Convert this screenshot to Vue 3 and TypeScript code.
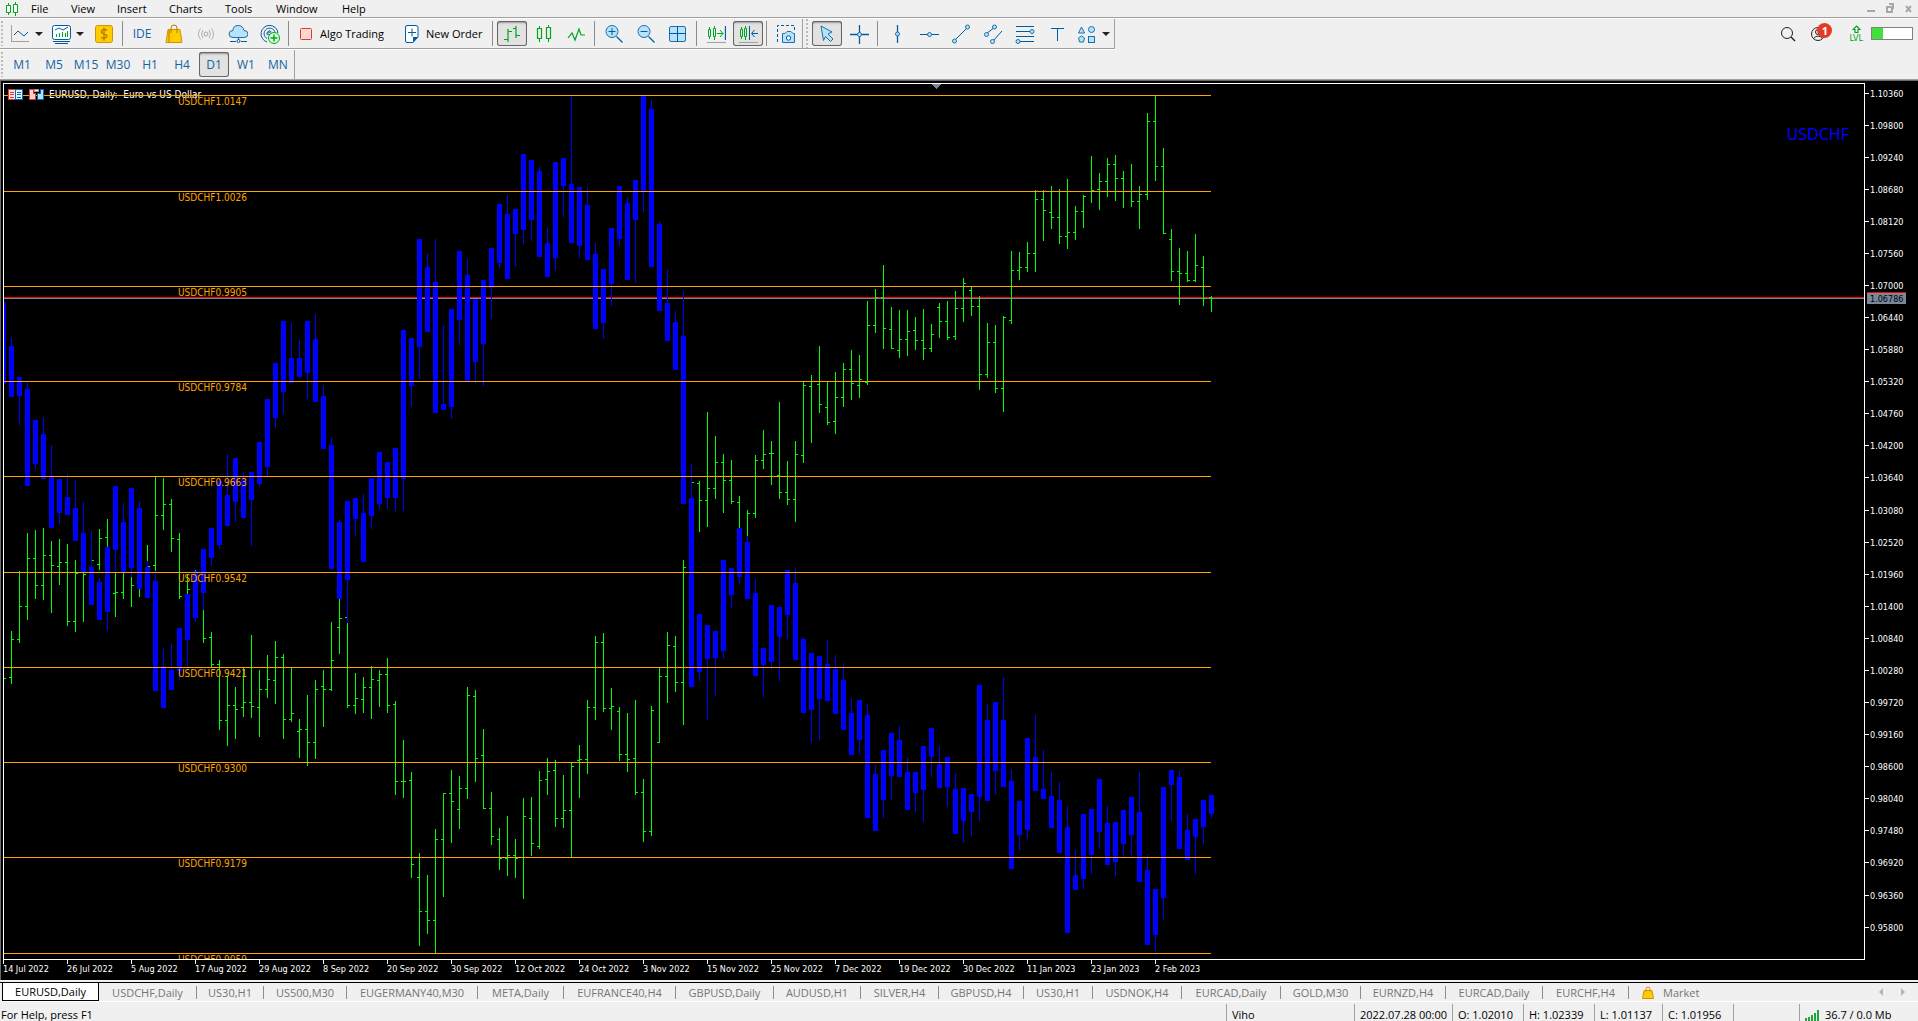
<script setup lang="ts">
import { ref } from 'vue'

type Quad = [number, number, number, number]

interface Tool {
  icon: string
  label: string
  kind?: 'sep' | 'grip' | 'wide' | 'text' | 'caret'
  pressed?: boolean
}

const menus = [
  { name: 'File', width: 40 },
  { name: 'View', width: 46 },
  { name: 'Insert', width: 52 },
  { name: 'Charts', width: 56 },
  { name: 'Tools', width: 51 },
  { name: 'Window', width: 66 },
  { name: 'Help', width: 46 },
]

const B = 'fill="none" stroke="#005c9e"'
const L = 'fill="#b8e1fa" stroke="#1a70aa"'
const G = 'fill="none" stroke="#00a51e"'

const icons: Record<string, string> = {
  line: `<path d="M1.5 1v17M1 17.5h18" fill="none" stroke="#a0a0a0"/><path d="M4 11l4-4 6 5 4-4" ${B}/>`,
  indicators: `<rect x="1.500" y="1.500" width="18" height="14" rx="2" fill="#fff" stroke="#005c9e"/><path d="M4 6l4-2 4 2 5-3" ${B}/><path d="M5.500 13v-3M8.500 13V9M11.500 13V8M14.500 13V9M16.500 13V7" ${G}/><path d="M2 17.500h17M4 19.500h13" ${B}/>`,
  dollar: `<rect x="1.500" y="1.500" width="17" height="17" rx="2" fill="#fc0" stroke="#cf9500"/><path d="M13 6.500Q10 4.500 8 6.500T10 10T12.500 13Q10 15.500 7 13.500M10 3.500v13" fill="none" stroke="#b77b00" stroke-width="1.300"/>`,
  bag: `<path d="M4 5.500h12l2 13H2z" fill="#fc0" stroke="#cf9500"/><path d="M7 9V4q0-3 3-3t3 3v5M5 6v12" fill="none" stroke="#b77b00"/>`,
  signal: `<circle cx="10" cy="10" r="2" fill="none" stroke="#a8a8a8"/><path d="M7 6q-3 4 0 8M13 6q3 4 0 8M4.500 4.500q-4 5.500 0 11M15.500 4.500q4 5.500 0 11" fill="none" stroke="#b0b0b0"/>`,
  cloud: `<path d="M5 13.500q-4 0-4-3.500t4-3.500q0-5 5-5t6 5q4 0 4 3.500t-4 3.500z" ${L}/><path d="M10.500 14v4M2 17.500h6M13 17.500h6" ${B}/><circle cx="10.500" cy="17" r="1.500" fill="#fff" stroke="#005c9e"/>`,
  radar: `<path d="M7 18a8.500 8.500 0 1 1 11-9M7 14.500a5.500 5.500 0 1 1 8-6M7.500 11a2.500 2.500 0 1 1 4-3" ${B}/><circle cx="9" cy="9.500" r="1.500" ${L}/><circle cx="14" cy="14" r="5.500" fill="#dfffe0" stroke="#00a51e"/><path d="M14 10.500v7M10.500 14h7" ${G} stroke-width="1.500"/>`,
  algo: `<rect x="4.500" y="4.500" width="11" height="11" rx="1" fill="#ffd8d0" stroke="#e03a36"/>`,
  order: `<path d="M5 1.500h9q2 0 2 2V13l-5 5.500H5q-1.500 0-1.500-1.500V3q0-1.500 1.500-1.500z" fill="#fff" stroke="#005c9e"/><path d="M16 13l-5 5.500V13z" fill="#005c9e"/><path d="M10 4.500v8M6 8.500h8" ${B}/>`,
  bars: `<path d="M6 5v13M2 15.500h4M6 7.500h4M14 2v12M11 4.500h3M14 11.500h4" ${G} stroke-width="1.200"/>`,
  candles: `<path d="M5.500 2v2M5.500 15v3M14.500 1v2M14.500 15v3" ${G}/><path d="M3.500 4.500h4v10h-4zM12.500 3.500h4v11h-4z" ${G} stroke-width="1.200"/>`,
  zigzag: `<path d="M2 14l4-5 3 7 4-11 2 6h4" ${G} stroke-width="1.200"/>`,
  zoomin: `<path d="M12.500 12.500l6 6" ${B} stroke-width="1.300"/><circle cx="8" cy="7.500" r="6" ${L}/><path d="M8 4v7M4.500 7.500h7" ${B}/>`,
  zoomout: `<path d="M12.500 12.500l6 6" ${B} stroke-width="1.300"/><circle cx="8" cy="7.500" r="6" ${L}/><path d="M4.500 7.500h7" ${B}/>`,
  tile: `<rect x="1.500" y="2.500" width="16" height="15" rx="1.500" ${L}/><path d="M9.500 2v16M1 9.500h17" ${B}/>`,
  scroll: `<path d="M3.500 3v2M3.500 13v2M8.500 2v2M8.500 13v3M2.500 5.500h2v7h-2zM7.500 4.500h2v8h-2zM11 9.500h6M14 6l3 3.500-3 3.500" ${G}/><path d="M19.500 2v14" ${B} stroke-width="1.300"/><path d="M1 18.500h19" fill="none" stroke="#a0a0a0"/>`,
  shift: `<path d="M3.500 3v2M3.500 13v2M7.500 2v2M7.500 13v3M2.500 5.500h2v7h-2zM6.500 4.500h2v8h-2z" ${G}/><path d="M11.500 2v14M20 9.500h-6M16.500 6l-3 3.500 3 3.500" ${B}/><path d="M1 18.500h19" fill="none" stroke="#a0a0a0"/>`,
  camera: `<path d="M1.500 18V1.500h17V6" ${B} stroke-dasharray="3 2"/><path d="M7 9.500h2l2-2h4l2 2h1.500v9h-12v-9z" ${L}/><circle cx="12.500" cy="14" r="2.200" fill="#fff" stroke="#005c9e"/>`,
  pointer: `<path d="M4 2l11 6-4 2 5 5-2.500 2.500-5-5-2 4z" ${L}/>`,
  cross: `<path d="M10.500 1v19M1 10.500h19" ${B} stroke-width="1.300"/><circle cx="10.500" cy="10.500" r="2" ${L}/>`,
  vline: `<path d="M10.500 1v18" ${B} stroke-width="1.300"/><circle cx="10.500" cy="10" r="2" ${L}/>`,
  hline: `<path d="M1 10.500h19" ${B}/><circle cx="10.500" cy="10.500" r="2" ${L}/>`,
  trend: `<path d="M4 16L16 4" ${B}/><circle cx="3.500" cy="17" r="2" ${L}/><circle cx="16.500" cy="3" r="2" ${L}/>`,
  channel: `<path d="M3 10l9-7M10 17l9-10" ${B}/><circle cx="3.500" cy="10.500" r="2" ${L}/><circle cx="11.500" cy="3" r="2" ${L}/><circle cx="9.500" cy="17.500" r="2" ${L}/>`,
  fibo: `<path d="M1 2.500h18M1 7.500h14M1 12.500h18M5 17.500h14" ${B}/><circle cx="17" cy="7.500" r="2" ${L}/><circle cx="3" cy="17.500" r="2" ${L}/>`,
  text: `<path d="M4 4.500h13M10.500 5v12" ${B}/>`,
  shapes: `<path d="M4.500 3l3 6h-6z" ${L}/><circle cx="14.500" cy="5.500" r="3" ${L}/><path d="M4.500 12l3 2-1 4h-4l-1-4z" ${L}/><rect x="11.500" y="12.500" width="6" height="6" ${L}/>`,
}

const tools: Tool[] = [
  { icon: '', label: '', kind: 'grip' },
  { icon: 'line', label: 'Chart type', kind: 'caret' },
  { icon: 'indicators', label: 'Indicators', kind: 'caret' },
  { icon: 'dollar', label: 'Symbols' },
  { icon: '', label: '', kind: 'sep' },
  { icon: '', label: 'IDE', kind: 'text' },
  { icon: 'bag', label: 'Market' },
  { icon: 'signal', label: 'Signals' },
  { icon: 'cloud', label: 'VPS' },
  { icon: 'radar', label: 'Copy trading' },
  { icon: '', label: '', kind: 'sep' },
  { icon: 'algo', label: 'Algo Trading', kind: 'wide' },
  { icon: 'order', label: 'New Order', kind: 'wide' },
  { icon: '', label: '', kind: 'sep' },
  { icon: 'bars', label: 'Bar chart', pressed: true },
  { icon: 'candles', label: 'Candlesticks' },
  { icon: 'zigzag', label: 'Line chart' },
  { icon: '', label: '', kind: 'sep' },
  { icon: 'zoomin', label: 'Zoom in' },
  { icon: 'zoomout', label: 'Zoom out' },
  { icon: 'tile', label: 'Tile windows' },
  { icon: '', label: '', kind: 'sep' },
  { icon: 'scroll', label: 'Auto scroll' },
  { icon: 'shift', label: 'Chart shift', pressed: true },
  { icon: '', label: '', kind: 'sep' },
  { icon: 'camera', label: 'Screenshot' },
  { icon: '', label: '', kind: 'grip' },
  { icon: 'pointer', label: 'Cursor', pressed: true },
  { icon: 'cross', label: 'Crosshair' },
  { icon: '', label: '', kind: 'sep' },
  { icon: 'vline', label: 'Vertical line' },
  { icon: 'hline', label: 'Horizontal line' },
  { icon: 'trend', label: 'Trendline' },
  { icon: 'channel', label: 'Channel' },
  { icon: 'fibo', label: 'Fibonacci' },
  { icon: 'text', label: 'Text' },
  { icon: 'shapes', label: 'Shapes', kind: 'caret' },
]

const frames = ['M1', 'M5', 'M15', 'M30', 'H1', 'H4', 'D1', 'W1', 'MN']
const frame = ref('D1')

const tabs = [
  { name: 'EURUSD,Daily', width: 97 },
  { name: 'USDCHF,Daily', width: 98 },
  { name: 'US30,H1', width: 67 },
  { name: 'US500,M30', width: 83 },
  { name: 'EUGERMANY40,M30', width: 131 },
  { name: 'META,Daily', width: 86 },
  { name: 'EUFRANCE40,H4', width: 112 },
  { name: 'GBPUSD,Daily', width: 98 },
  { name: 'AUDUSD,H1', width: 87 },
  { name: 'SILVER,H4', width: 78 },
  { name: 'GBPUSD,H4', width: 85 },
  { name: 'US30,H1', width: 69 },
  { name: 'USDNOK,H4', width: 89 },
  { name: 'EURCAD,Daily', width: 99 },
  { name: 'GOLD,M30', width: 80 },
  { name: 'EURNZD,H4', width: 85 },
  { name: 'EURCAD,Daily', width: 97 },
  { name: 'EURCHF,H4', width: 86 },
]
const activeTab = ref(0)

const dates = [
  '14 Jul 2022', '26 Jul 2022', '5 Aug 2022', '17 Aug 2022', '29 Aug 2022', '8 Sep 2022', '20 Sep 2022',
  '30 Sep 2022', '12 Oct 2022', '24 Oct 2022', '3 Nov 2022', '15 Nov 2022', '25 Nov 2022', '7 Dec 2022',
  '19 Dec 2022', '30 Dec 2022', '11 Jan 2023', '23 Jan 2023', '2 Feb 2023',
]

const prices = Array.from({ length: 27 }, (_, i) => ({
  label: (1.1036 - i * 0.0056).toFixed(4) + '0',
  y: Math.floor(13 + i * 32.08),
}))

const levels = [
  { y: 15, price: '1.0147' },
  { y: 111, price: '1.0026' },
  { y: 206, price: '0.9905' },
  { y: 301, price: '0.9784' },
  { y: 396, price: '0.9663' },
  { y: 492, price: '0.9542' },
  { y: 587, price: '0.9421' },
  { y: 682, price: '0.9300' },
  { y: 777, price: '0.9179' },
  { y: 873, price: '0.9059' },
]

// EURUSD bars: open, high, low, close on the chart's vertical scale
const eurusd: Quad[] = [
  [598, 590, 600, 598], [597, 551, 604, 559], [559, 491, 563, 526], [526, 453, 540, 478], [478, 450, 519, 505],
  [505, 448, 520, 475], [475, 461, 533, 485], [486, 459, 505, 482], [482, 464, 546, 541], [541, 480, 552, 493],
  [491, 460, 542, 494], [494, 475, 510, 480], [484, 449, 490, 458], [457, 439, 525, 513], [513, 480, 537, 512],
  [512, 480, 519, 485], [485, 485, 527, 505], [500, 480, 517, 490], [490, 465, 500, 486], [485, 397, 491, 435],
  [435, 398, 450, 424], [424, 419, 472, 458], [459, 453, 519, 516], [516, 495, 530, 509], [509, 490, 530, 500],
  [500, 490, 563, 558], [557, 552, 588, 584], [584, 580, 650, 640], [640, 596, 666, 625], [625, 607, 659, 629],
  [627, 587, 637, 622], [622, 555, 638, 626], [627, 590, 657, 609], [609, 575, 618, 599], [600, 561, 624, 577],
  [577, 574, 659, 639], [639, 588, 642, 633], [651, 639, 678, 649], [649, 615, 686, 662], [662, 600, 679, 609],
  [606, 590, 647, 609], [609, 542, 611, 580], [547, 510, 574, 538], [537, 543, 628, 625], [625, 593, 634, 618],
  [619, 597, 633, 607], [607, 586, 639, 599], [600, 590, 627, 594], [594, 578, 633, 625], [624, 621, 715, 701],
  [701, 660, 718, 701], [700, 692, 798, 784], [797, 773, 866, 831], [831, 795, 854, 840], [840, 749, 873, 759],
  [759, 713, 817, 713], [713, 690, 763, 721], [729, 696, 749, 708], [708, 607, 719, 615], [616, 610, 702, 678],
  [675, 649, 729, 728], [728, 712, 765, 756], [759, 748, 790, 778], [778, 736, 796, 775], [775, 759, 798, 778],
  [777, 718, 819, 736], [738, 717, 776, 763], [766, 691, 769, 700], [699, 678, 715, 691], [690, 680, 747, 738],
  [738, 695, 748, 730], [730, 683, 777, 686], [680, 665, 718, 679], [679, 620, 694, 627], [627, 556, 640, 562],
  [562, 553, 632, 628], [628, 608, 650, 626], [631, 627, 681, 674], [674, 633, 692, 679], [678, 620, 715, 712],
  [712, 699, 762, 751], [751, 626, 756, 630], [662, 587, 663, 596], [596, 552, 623, 565], [566, 556, 612, 602],
  [602, 480, 645, 487], [487, 420, 490, 402], [403, 401, 452, 420], [420, 332, 447, 408], [408, 356, 419, 382],
  [382, 374, 433, 400], [400, 380, 424, 421], [422, 416, 480, 460], [470, 430, 456, 433], [433, 375, 438, 380],
  [380, 350, 389, 374], [373, 361, 405, 373], [395, 322, 419, 412], [412, 381, 425, 419], [419, 361, 442, 374],
  [375, 301, 383, 305], [306, 295, 363, 301], [304, 266, 333, 324], [327, 301, 345, 342], [341, 292, 354, 317],
  [317, 283, 327, 289], [289, 270, 320, 303], [305, 275, 318, 299], [302, 221, 305, 245], [245, 209, 253, 217],
  [217, 185, 269, 248], [249, 227, 269, 268], [270, 230, 278, 259], [259, 230, 276, 251], [250, 237, 270, 260],
  [260, 229, 280, 268], [268, 244, 272, 254], [227, 223, 258, 241], [241, 221, 260, 257], [256, 211, 260, 228],
  [228, 198, 242, 203], [210, 206, 236, 226], [226, 216, 310, 294], [294, 243, 298, 262], [262, 245, 313, 308],
  [308, 236, 332, 237], [240, 171, 244, 190], [190, 172, 200, 187], [187, 162, 192, 173], [173, 110, 192, 119],
  [119, 110, 161, 130], [132, 106, 149, 137], [137, 109, 164, 156], [156, 99, 169, 152], [152, 126, 160, 131],
  [131, 115, 148, 116], [111, 76, 123, 110], [109, 93, 130, 101], [101, 78, 117, 84], [84, 75, 121, 98],
  [98, 91, 128, 111], [111, 84, 127, 121], [121, 106, 149, 114], [114, 33, 120, 41], [41, 16, 101, 86],
  [86, 68, 154, 153], [159, 149, 201, 191], [191, 168, 225, 193], [193, 171, 202, 200], [200, 154, 202, 185],
  [187, 176, 226, 218], [217, 216, 232, 218],
]

// USDCHF candles: high, body top, body bottom, low on the same scale
const usdchf: Quad[] = [
  [222, 222, 304, 304], [257, 266, 317, 317], [297, 297, 316, 345], [302, 309, 406, 406], [340, 340, 384, 390],
  [337, 354, 399, 399], [365, 397, 448, 448], [399, 399, 433, 444], [394, 417, 435, 435], [400, 428, 461, 461],
  [422, 453, 492, 492], [451, 487, 525, 525], [498, 502, 540, 540], [467, 467, 532, 551], [406, 406, 470, 492],
  [423, 442, 492, 492], [408, 408, 488, 497], [421, 428, 509, 509], [481, 487, 518, 518], [491, 501, 611, 611],
  [568, 586, 628, 628], [564, 590, 610, 610], [548, 548, 591, 600], [514, 514, 560, 588], [491, 491, 538, 542],
  [469, 469, 513, 530], [448, 448, 478, 486], [401, 401, 465, 469], [374, 415, 446, 446], [378, 378, 422, 442],
  [392, 399, 438, 438], [392, 392, 420, 466], [362, 362, 404, 406], [319, 319, 387, 396], [283, 283, 338, 348],
  [241, 241, 312, 334], [243, 278, 303, 303], [260, 278, 297, 297], [241, 241, 293, 319], [234, 259, 322, 322],
  [305, 316, 369, 369], [357, 365, 489, 489], [440, 442, 519, 519], [421, 421, 500, 543], [418, 418, 439, 456],
  [414, 433, 482, 482], [398, 398, 436, 449], [372, 372, 424, 429], [382, 382, 418, 429], [368, 368, 418, 432],
  [250, 250, 399, 431], [258, 258, 306, 327], [159, 159, 267, 299], [173, 187, 252, 252], [159, 202, 333, 333],
  [245, 324, 330, 330], [229, 229, 327, 339], [171, 171, 240, 265], [179, 195, 301, 301], [219, 219, 282, 303],
  [200, 200, 264, 306], [168, 168, 208, 239], [124, 124, 183, 188], [115, 134, 199, 199], [129, 129, 154, 187],
  [74, 74, 150, 164], [80, 80, 140, 161], [87, 91, 177, 177], [148, 163, 197, 197], [82, 82, 178, 191],
  [78, 78, 106, 137], [16, 104, 163, 163], [107, 107, 166, 178], [107, 125, 180, 180], [163, 174, 249, 249],
  [189, 189, 243, 259], [148, 148, 204, 226], [106, 106, 159, 166], [117, 123, 200, 200], [100, 100, 140, 203],
  [16, 16, 111, 132], [20, 29, 187, 187], [141, 144, 231, 231], [189, 223, 261, 261], [231, 242, 290, 290],
  [211, 256, 424, 424], [384, 418, 607, 607], [534, 534, 592, 601], [545, 545, 579, 640], [551, 551, 578, 616],
  [480, 480, 571, 579], [488, 488, 515, 528], [448, 448, 497, 504], [456, 462, 519, 519], [499, 513, 596, 596],
  [568, 568, 585, 617], [525, 525, 582, 589], [527, 527, 557, 601], [490, 490, 535, 559], [488, 503, 580, 580],
  [557, 559, 633, 633], [573, 573, 630, 663], [576, 576, 619, 660], [560, 584, 621, 621], [575, 589, 634, 634],
  [583, 600, 650, 650], [618, 633, 675, 675], [620, 620, 660, 674], [624, 635, 738, 738], [685, 694, 751, 751],
  [670, 670, 720, 738], [653, 653, 696, 720], [646, 660, 697, 697], [677, 692, 730, 730], [692, 692, 713, 732],
  [666, 666, 710, 742], [648, 648, 677, 697], [666, 684, 708, 708], [677, 677, 707, 727], [693, 709, 754, 754],
  [708, 708, 741, 763], [714, 714, 732, 756], [605, 605, 717, 741], [624, 640, 721, 721], [622, 622, 691, 715],
  [597, 640, 707, 707], [689, 701, 789, 789], [721, 721, 755, 771], [658, 658, 750, 759], [635, 677, 711, 711],
  [670, 709, 719, 719], [692, 716, 748, 748], [702, 720, 773, 773], [726, 747, 853, 853], [770, 795, 810, 810],
  [734, 734, 799, 809], [729, 729, 775, 794], [699, 699, 752, 769], [726, 743, 785, 785], [742, 742, 782, 796],
  [730, 730, 764, 777], [717, 717, 755, 777], [692, 732, 802, 802], [775, 790, 865, 865], [809, 809, 855, 873],
  [707, 707, 818, 840], [690, 690, 705, 741], [691, 697, 769, 769], [734, 750, 780, 780], [739, 739, 757, 794],
  [720, 720, 747, 764], [715, 715, 734, 738],
]

const step = 8
const barX = (i: number) => 3 + i * step
const box = (x: number, y: number, w: number, h: number) => `M${x} ${y}h${w}v${h}h${-w}z`

const barPath = eurusd
  .map(([o, h, l, c], i) => box(barX(i), h, 1, l - h) + box(barX(i) - 2, o, 2, 1) + box(barX(i) + 1, c, 2, 1))
  .join('')
const wickPath = usdchf.map(([h, , , l], i) => box(barX(i), h, 1, l - h)).join('')
const bodyPath = usdchf.map(([, t, b], i) => box(barX(i) - 2, t, 5, b - t)).join('')
</script>

<template>
  <div class="terminal">
    <nav class="menubar">
      <svg class="logo" width="14" height="14" viewBox="0 0 14 14" fill="#fff" stroke="#00a51e">
        <path d="M3.500 1v12M10.500 0v14" /><path d="M1.500 3.500h4v7h-4zM8.500 2.500h4v8h-4z" />
      </svg>
      <button v-for="m in menus" :key="m.name" type="button" :style="{ width: m.width + 'px' }">{{ m.name }}</button>
      <svg class="winctl" width="48" height="14" viewBox="0 0 48 14" fill="none" stroke="#a8a8a8" stroke-width="2">
        <path d="M0 9h8" /><path d="M20 5h5v5h-5zM22 2h4v5" /><path d="M39 4l5 6M44 4l-5 6" />
      </svg>
    </nav>

    <div class="strip">
      <div class="toolbar">
        <template v-for="(t, i) in tools" :key="i">
          <span v-if="t.kind === 'sep'" class="sep"></span>
          <span v-else-if="t.kind === 'grip'" class="grip" :class="{ inner: i > 0 }"></span>
          <button
            v-else
            type="button"
            class="tool"
            :class="[t.kind, { pressed: t.pressed }]"
            :aria-label="t.label"
          >
            <svg v-if="t.icon" width="20" height="20" viewBox="0 0 20 20" v-html="icons[t.icon]"></svg>
            <span v-if="t.kind === 'wide' || t.kind === 'text'">{{ t.label }}</span>
            <i v-if="t.kind === 'caret'" class="caret"></i>
          </button>
        </template>
      </div>
      <div class="account">
        <button type="button" class="tool" aria-label="Search">
          <svg width="16" height="16" viewBox="0 0 16 16" fill="none" stroke="#222">
            <circle cx="7" cy="7" r="5.500" /><path d="M11 11l4 4" stroke-width="1.500" />
          </svg>
        </button>
        <button type="button" class="tool user" aria-label="Notifications">
          <svg width="16" height="16" viewBox="0 0 16 16" fill="none" stroke="#222">
            <circle cx="8" cy="8" r="6.500" /><circle cx="8" cy="6" r="2.500" /><path d="M3.500 12.500q4.500-5 9 0" />
          </svg>
          <b>1</b>
        </button>
        <div class="lvl">
          <svg width="9" height="9" viewBox="0 0 9 9" fill="none" stroke="#00a51e" stroke-width="1.200">
            <path d="M4.500 1L8 4.500H6v3H3v-3H1z" />
          </svg>
          <span>LVL</span>
        </div>
        <div class="meter"><span></span></div>
      </div>
    </div>

    <div class="timeframes">
      <span class="grip"></span>
      <button
        v-for="f in frames"
        :key="f"
        type="button"
        class="tool text"
        :class="{ pressed: f === frame }"
        @click="frame = f"
      >{{ f }}</button>
    </div>

    <main class="chart">
      <div class="plot">
        <svg width="100%" height="875" shape-rendering="crispEdges">
          <g transform="translate(-4 -4)">
            <rect x="4" y="217" width="100%" height="1" fill="#f00" />
            <rect x="4" y="218" width="100%" height="1" fill="#778899" />
            <text class="title" x="49" y="18">EURUSD, Daily:&nbsp; Euro vs US Dollar</text>
            <path :d="barPath" fill="#0f0" />
            <path :d="wickPath" fill="#00f" />
            <path :d="bodyPath" fill="#00f" />
            <path d="M931 4h10l-5 5z" fill="#778899" />
            <g v-for="l in levels" :key="l.y" fill="#ffa500">
              <rect x="4" :y="l.y" width="1207" height="1" />
              <text class="level" x="178" :y="l.y + 10">USDCHF{{ l.price }}</text>
            </g>
            <g stroke-width="1">
              <rect x="8.500" y="9.500" width="7" height="10" fill="#ffe0dc" stroke="#e03a36" />
              <rect x="15.500" y="9.500" width="7" height="10" fill="#e0f2ff" stroke="#0a6ab0" />
              <path d="M10 12.500h4M10 14.500h4M10 17.500h4" stroke="#e03a36" />
              <path d="M17 12.500h4M17 14.500h4M17 17.500h4" stroke="#0a6ab0" />
              <path d="M29.500 9.500h4v4h2v6h-6z" fill="#ffd8d0" stroke="#e03a36" />
              <path d="M43.500 9.500h-3v4h-3v6h6z" fill="#b8e1fa" stroke="#0a6ab0" />
              <rect x="34.500" y="9.500" width="4" height="2" fill="#fff" stroke="#999" />
            </g>
          </g>
        </svg>
        <span class="overlay">USDCHF</span>
      </div>
      <svg class="prices" width="52" height="897" shape-rendering="crispEdges">
        <g transform="translate(0 -3)" fill="#fff">
          <g v-for="p in prices" :key="p.label">
            <rect x="0" :y="p.y" width="4" height="1" />
            <text x="5" :y="p.y + 4">{{ p.label }}</text>
          </g>
          <rect x="2" y="212" width="39" height="12" fill="#778899" />
          <rect x="2" y="212" width="39" height="1" fill="#f00" />
          <text x="5" y="222" fill="#000">1.06786</text>
        </g>
      </svg>
      <ul class="dates">
        <li v-for="d in dates" :key="d">{{ d }}</li>
      </ul>
    </main>

    <div class="tabs">
      <button
        v-for="(t, i) in tabs"
        :key="i"
        type="button"
        :class="{ active: i === activeTab }"
        :style="{ width: t.width + 'px' }"
        @click="activeTab = i"
      >{{ t.name }}</button>
      <button type="button" class="market">
        <svg width="12" height="13" viewBox="0 0 12 13" fill="#fc0" stroke="#cf9500">
          <path d="M2 4.500h8l1.500 8H.5z" /><path d="M4 6V3q0-2 2-2t2 2v3" fill="none" />
        </svg>
        Market
      </button>
      <svg class="arrows" width="28" height="8" viewBox="0 0 28 8" fill="#b4b4b4">
        <path d="M4 0v8L0 4zM22 0v8l4-4z" />
      </svg>
    </div>

    <footer class="status">
      <span class="help">For Help, press F1</span>
      <span class="cell server">Viho</span>
      <span class="cell time">2022.07.28 00:00</span>
      <span class="cell quote">O: 1.02010</span>
      <span class="cell quote">H: 1.02339</span>
      <span class="cell close">L: 1.01137</span>
      <span class="cell quote">C: 1.01956</span>
      <span class="cell blank"></span>
      <span class="cell traffic">
        <svg width="15" height="12" viewBox="0 0 15 12" fill="#1fa53a">
          <path d="M0 9h2v3H0zM3 8h2v4H3zM6 6h2v6H6zM9 4h2v8H9zM12 1h2v11h-2z" />
        </svg>
        36.7 / 0.0 Mb
      </span>
    </footer>
  </div>
</template>

<style>
body {
  margin: 0;
  background: #f0f0f0;
}
</style>

<style scoped>
.terminal {
  display: flex;
  flex-direction: column;
  min-height: 100vh;
  background: #f0f0f0;
  color: #000;
  font: 12px/16px "Open Sans", "Noto Sans", sans-serif;
  overflow: hidden;
}
button {
  margin: 0;
  padding: 0;
  border: 0;
  background: none;
  color: inherit;
  font: inherit;
  white-space: nowrap;
}
.menubar {
  display: flex;
  align-items: center;
  height: 17px;
  padding: 0 3px 0 5px;
  border-bottom: 1px solid #a0a0a0;
  box-shadow: 0 1px #fff;
  margin-bottom: 1px;
  font-size: 11px;
}
.menubar button {
  text-align: left;
}
.logo {
  margin-right: 12px;
}
.winctl {
  margin-left: auto;
}
.strip {
  display: flex;
  align-items: flex-start;
  justify-content: space-between;
}
.toolbar {
  display: flex;
  align-items: center;
  height: 29px;
  border-bottom: 1px solid #a0a0a0;
  border-right: 1px solid #a0a0a0;
  box-shadow: 0 1px #fff;
  margin-bottom: 1px;
}
.grip {
  width: 6px;
  height: 25px;
  background: repeating-linear-gradient(#bbb 0 2px, transparent 2px 4px) 1px 0 / 2px 100% no-repeat;
}
.grip.inner {
  width: 9px;
  height: 29px;
  box-shadow: inset 1px 0 #a0a0a0;
  background-position: 4px 0;
}
.sep {
  width: 4px;
  height: 25px;
  margin-left: 2px;
  box-shadow: inset 1px 0 #8c8c8c;
}
.tool {
  display: flex;
  align-items: center;
  justify-content: center;
  flex: none;
  width: 30px;
  height: 25px;
  margin: 0 1px;
  border-radius: 3px;
}
.tool svg {
  flex: none;
}
.tool.pressed {
  background: #e2e2e2;
  box-shadow: inset 0 0 0 1px #666, inset 0 2px 2px #999;
}
.tool.text {
  color: #1464a0;
}
.tool.caret {
  width: 39px;
  justify-content: flex-start;
  padding-left: 3px;
  box-sizing: border-box;
  gap: 5px;
}
.tool.wide {
  width: auto;
  padding: 0 7px 0 3px;
  gap: 4px;
  font-size: 11px;
}
.tool.wide + .tool.wide {
  margin-left: 7px;
}
i.caret {
  border: 4px solid transparent;
  border-top-color: #222;
  border-bottom: 0;
}
.account {
  display: flex;
  align-items: center;
  height: 29px;
  padding-right: 5px;
}
.account .user {
  position: relative;
  margin-left: -1px;
}
.user b {
  position: absolute;
  left: 14px;
  top: 2px;
  width: 15px;
  height: 15px;
  border-radius: 8px;
  background: #e23c24;
  color: #fff;
  font: bold 11px/15px "Noto Sans", sans-serif;
}
.lvl {
  display: flex;
  flex-direction: column;
  align-items: center;
  margin: 0 8px 0 15px;
  color: #00a51e;
  font: 9px/8px "DejaVu Sans Condensed", sans-serif;
}
.meter {
  width: 40px;
  height: 11px;
  border: 1px solid #808080;
  background: #fff;
}
.meter span {
  display: block;
  width: 11px;
  height: 11px;
  background: #43e03c;
}
.timeframes {
  display: flex;
  align-items: center;
  align-self: flex-start;
  height: 29px;
  border-right: 1px solid #a0a0a0;
}
.chart {
  flex: 1;
  display: grid;
  grid-template-columns: 1fr 52px;
  grid-template-rows: auto 1fr;
  padding: 2px 1px 0 2px;
  border-left: 1px solid #696969;
  border-top: 1px solid #696969;
  box-shadow: 0 -1px #a0a0a0;
  margin-top: 1px;
  background: #000;
  color: #fff;
  font: 9px/12px "DejaVu Sans Condensed", "Liberation Sans", sans-serif;
}
.plot {
  position: relative;
  border: 1px solid #fff;
}
.plot svg,
.prices {
  display: block;
}
.prices {
  grid-row: 1 / 3;
  grid-column: 2;
}
.title {
  fill: #fff;
  font-size: 10px;
}
.level {
  font-size: 10px;
}
.overlay {
  position: absolute;
  right: 15px;
  top: 38px;
  color: #00f;
  font: 16px/24px "Noto Sans", sans-serif;
}
.dates {
  display: flex;
  margin: 0;
  padding: 0;
  list-style: none;
}
.dates li {
  flex: none;
  width: 64px;
  height: 20px;
  line-height: 18px;
  background: linear-gradient(#fff, #fff) 0 0 / 1px 4px no-repeat;
}
.tabs {
  display: flex;
  align-items: center;
  height: 18px;
  padding-left: 2px;
  margin-top: 2px;
  border-top: 1px solid #000;
  color: #757575;
  font-size: 11px;
}
.tabs button {
  height: 13px;
  line-height: 13px;
  border-right: 1px solid #8c8c8c;
  box-sizing: border-box;
  text-align: center;
}
.tabs .active {
  height: 18px;
  line-height: 17px;
  margin-top: -1px;
  background: #fff;
  color: #000;
  border: 1px solid #000;
  border-top: 0;
}
.tabs .market {
  display: flex;
  align-items: center;
  gap: 9px;
  padding-left: 13px;
  border: 0;
}
.arrows {
  margin-left: auto;
  margin-right: 11px;
}
.status {
  display: flex;
  align-items: flex-end;
  height: 19px;
  border-top: 1px solid #fff;
  font-size: 11px;
  line-height: 12px;
}
.help {
  flex: 1;
  padding-left: 1px;
}
.cell {
  box-sizing: border-box;
  height: 17px;
  padding-top: 5px;
  padding-left: 5px;
  border-left: 1px solid #a0a0a0;
  white-space: nowrap;
}
.server {
  width: 128px;
}
.time {
  width: 98px;
}
.quote {
  width: 71px;
}
.close {
  width: 68px;
}
.blank {
  width: 66px;
}
.traffic {
  display: flex;
  align-items: center;
  gap: 5px;
  width: 119px;
}
</style>
